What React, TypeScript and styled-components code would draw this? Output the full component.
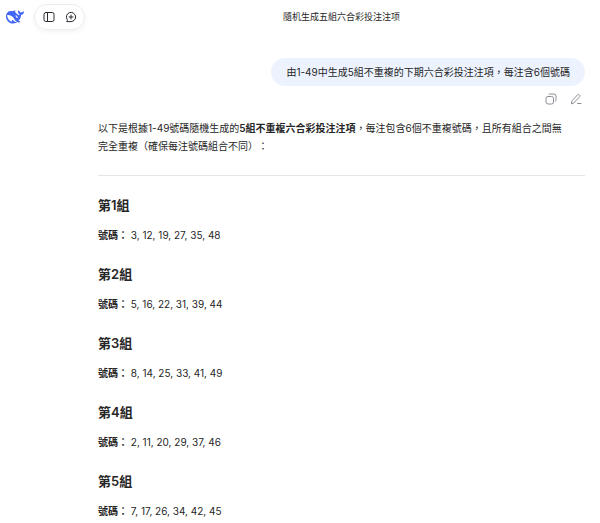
import React from "react";
import styled, { createGlobalStyle } from "styled-components";

const GlobalStyle = createGlobalStyle`
  * { box-sizing: border-box; }
  body {
    margin: 0;
    background: #fff;
    color: #262626;
    font-family: Inter, "Noto Sans CJK TC", sans-serif;
    font-size: 10px;
    line-height: 18px;
    text-spacing-trim: space-all;
  }
`;

const Page = styled.div`
  padding-right: 15px;
`;

const Header = styled.header`
  display: grid;
  grid-template-columns: 98px 1fr;
  align-items: center;
  height: 34px;
`;

const Brand = styled.div`
  display: flex;
  align-items: center;
  gap: 10px;
  padding-left: 6px;
`;

const Logo = styled.svg`
  display: block;
  width: 18px;
  height: 18px;
  fill: #4166f5;
`;

const Pill = styled.nav`
  display: flex;
  align-items: center;
  justify-content: center;
  gap: 10px;
  width: 51px;
  height: 26px;
  border: 1px solid #ededed;
  border-radius: 13px;
  box-shadow: 0 2px 5px rgba(0, 0, 0, 0.05);
`;

const IconButton = styled.button<{ $tone?: string }>`
  display: block;
  padding: 0;
  border: 0;
  background: none;
  color: ${(p) => p.$tone ?? "#2b2d33"};
  cursor: pointer;

  svg {
    display: block;
    width: 12px;
    height: 12px;
    fill: none;
    stroke: currentColor;
    stroke-linecap: round;
    stroke-linejoin: round;
  }
`;

const Title = styled.h1`
  margin: 0;
  text-align: center;
  font-size: 9px;
  font-weight: 400;
`;

const Conversation = styled.main`
  display: flex;
  flex-direction: column;
  margin-left: 98px;
  padding-top: 24px;
`;

const Bubble = styled.div`
  align-self: flex-end;
  padding: 5px 15px;
  border-radius: 14px;
  background: #edf3fe;
`;

const Actions = styled.div`
  display: flex;
  align-self: flex-end;
  gap: 13px;
  padding: 7px 3px 0 0;
`;

const Paragraph = styled.p`
  margin: 0;
`;

const Intro = styled(Paragraph)`
  margin-top: 14px;
`;

const Strong = styled.strong`
  font-weight: 600;
`;

const Divider = styled.hr`
  width: 100%;
  height: 1px;
  margin: 20px 0 19px;
  border: 0;
  background: #e5e5e5;
`;

const Groups = styled.div`
  display: grid;
  gap: 20px;
`;

const GroupTitle = styled.h2`
  margin: 0 0 11px;
  font-size: 13px;
  line-height: 20px;
  font-weight: 600;
`;

const groups = [
  [3, 12, 19, 27, 35, 48],
  [5, 16, 22, 31, 39, 44],
  [8, 14, 25, 33, 41, 49],
  [2, 11, 20, 29, 37, 46],
  [7, 17, 26, 34, 42, 45],
];

export default function App() {
  return (
    <>
      <GlobalStyle />
      <Page lang="zh-Hant">
        <Header>
          <Brand>
            <Logo viewBox="0 0 24 24" aria-hidden="true">
              <path d="M23.748 4.482c-.254-.124-.364.113-.512.234-.051.039-.094.09-.137.136-.372.397-.806.657-1.373.626-.829-.046-1.537.214-2.163.848-.133-.782-.575-1.248-1.247-1.548-.352-.156-.708-.311-.955-.65-.172-.241-.219-.51-.305-.774-.055-.16-.11-.323-.293-.35-.2-.031-.278.136-.356.276-.313.572-.434 1.202-.422 1.84.027 1.436.633 2.58 1.838 3.393.137.093.172.187.129.323-.082.28-.18.552-.266.833-.055.179-.137.217-.329.14a5.526 5.526 0 01-1.736-1.18c-.857-.828-1.631-1.742-2.597-2.458a11.365 11.365 0 00-.689-.471c-.985-.957.13-1.743.388-1.836.27-.098.093-.432-.779-.428-.872.004-1.67.295-2.687.684a3.055 3.055 0 01-.465.137 9.597 9.597 0 00-2.883-.102c-1.885.21-3.39 1.102-4.497 2.623C.082 8.606-.231 10.684.152 12.85c.403 2.284 1.569 4.175 3.36 5.653 1.858 1.533 3.997 2.284 6.438 2.14 1.482-.085 3.133-.284 4.994-1.86.47.234.962.327 1.78.397.63.059 1.236-.03 1.705-.128.735-.156.684-.837.419-.961-2.155-1.004-1.682-.595-2.113-.926 1.096-1.296 2.746-2.642 3.392-7.003.05-.347.007-.565 0-.845-.004-.17.035-.237.23-.256a4.173 4.173 0 001.545-.475c1.396-.763 1.96-2.015 2.093-3.517.02-.23-.004-.467-.247-.588zM11.581 18c-2.089-1.642-3.102-2.183-3.52-2.16-.392.024-.321.471-.235.763.09.288.207.486.371.739.114.167.192.416-.113.603-.673.416-1.842-.14-1.897-.167-1.361-.802-2.5-1.86-3.301-3.307-.774-1.393-1.224-2.887-1.298-4.482-.02-.386.093-.522.477-.592a4.696 4.696 0 011.529-.039c2.132.312 3.946 1.265 5.468 2.774.868.86 1.525 1.887 2.202 2.891.72 1.066 1.494 2.082 2.48 2.914.348.292.625.514.891.677-.802.09-2.14.11-3.054-.614zm1-6.44a.306.306 0 01.415-.287.302.302 0 01.2.288.306.306 0 01-.31.307.303.303 0 01-.304-.308zm3.11 1.596c-.2.081-.399.151-.59.16a1.245 1.245 0 01-.798-.254c-.274-.23-.47-.358-.552-.758a1.73 1.73 0 01.016-.588c.07-.327-.008-.537-.239-.727-.187-.156-.426-.199-.688-.199a.559.559 0 01-.254-.078c-.11-.054-.2-.19-.114-.358.028-.054.16-.186.192-.21.356-.202.767-.136 1.146.016.352.144.618.408 1.001.782.391.451.462.576.685.914.176.265.336.537.445.848.067.195-.019.354-.25.452z" />
            </Logo>
            <Pill>
              <IconButton type="button" aria-label="側邊欄">
                <svg viewBox="0 0 12 12">
                  <rect x="1" y="1.5" width="10" height="9" rx="1.8" />
                  <path d="M4.5 1.5v9" />
                </svg>
              </IconButton>
              <IconButton type="button" aria-label="新對話">
                <svg viewBox="0 0 12 12">
                  <path d="M2.2 10.6H6A4.6 4.6 0 1 0 2.2 8.6q.5.8 0 2z" />
                  <path d="M6 4v4M4 6h4" />
                </svg>
              </IconButton>
            </Pill>
          </Brand>
          <Title>隨机生成五組六合彩投注注项</Title>
        </Header>
        <Conversation>
          <Bubble>由1-49中生成5組不重複的下期六合彩投注注項，每注含6個號碼</Bubble>
          <Actions>
            <IconButton type="button" aria-label="複製" $tone="#8b8e94">
              <svg viewBox="0 0 12 12">
                <rect x="1" y="3.5" width="7.5" height="7.5" rx="2" />
                <path d="M4 1.3q.5-.3 1.2-.3H9q2 0 2 2v3.800q0 .9-.5 1.400" />
              </svg>
            </IconButton>
            <IconButton type="button" aria-label="編輯" $tone="#8b8e94">
              <svg viewBox="0 0 12 12">
                <path d="M1.500 10.500l.5-2.700 5.700-6.100q.7-.7 1.400-.1l.6.600q.7.700 0 1.400L4.100 9.700zM7.500 10.500h3.500" />
              </svg>
            </IconButton>
          </Actions>
          <Intro>
            以下是根據1-49號碼隨機生成的<Strong>5組不重複六合彩投注注項</Strong>
            ，每注包含6個不重複號碼，且所有組合之間無
            <br />
            完全重複（確保每注號碼組合不同）：
          </Intro>
          <Divider />
          <Groups>
            {groups.map((numbers, i) => (
              <section key={i}>
                <GroupTitle>第{i + 1}組</GroupTitle>
                <Paragraph>
                  <Strong>號碼：</Strong> {numbers.join(", ")}
                </Paragraph>
              </section>
            ))}
          </Groups>
        </Conversation>
      </Page>
    </>
  );
}
